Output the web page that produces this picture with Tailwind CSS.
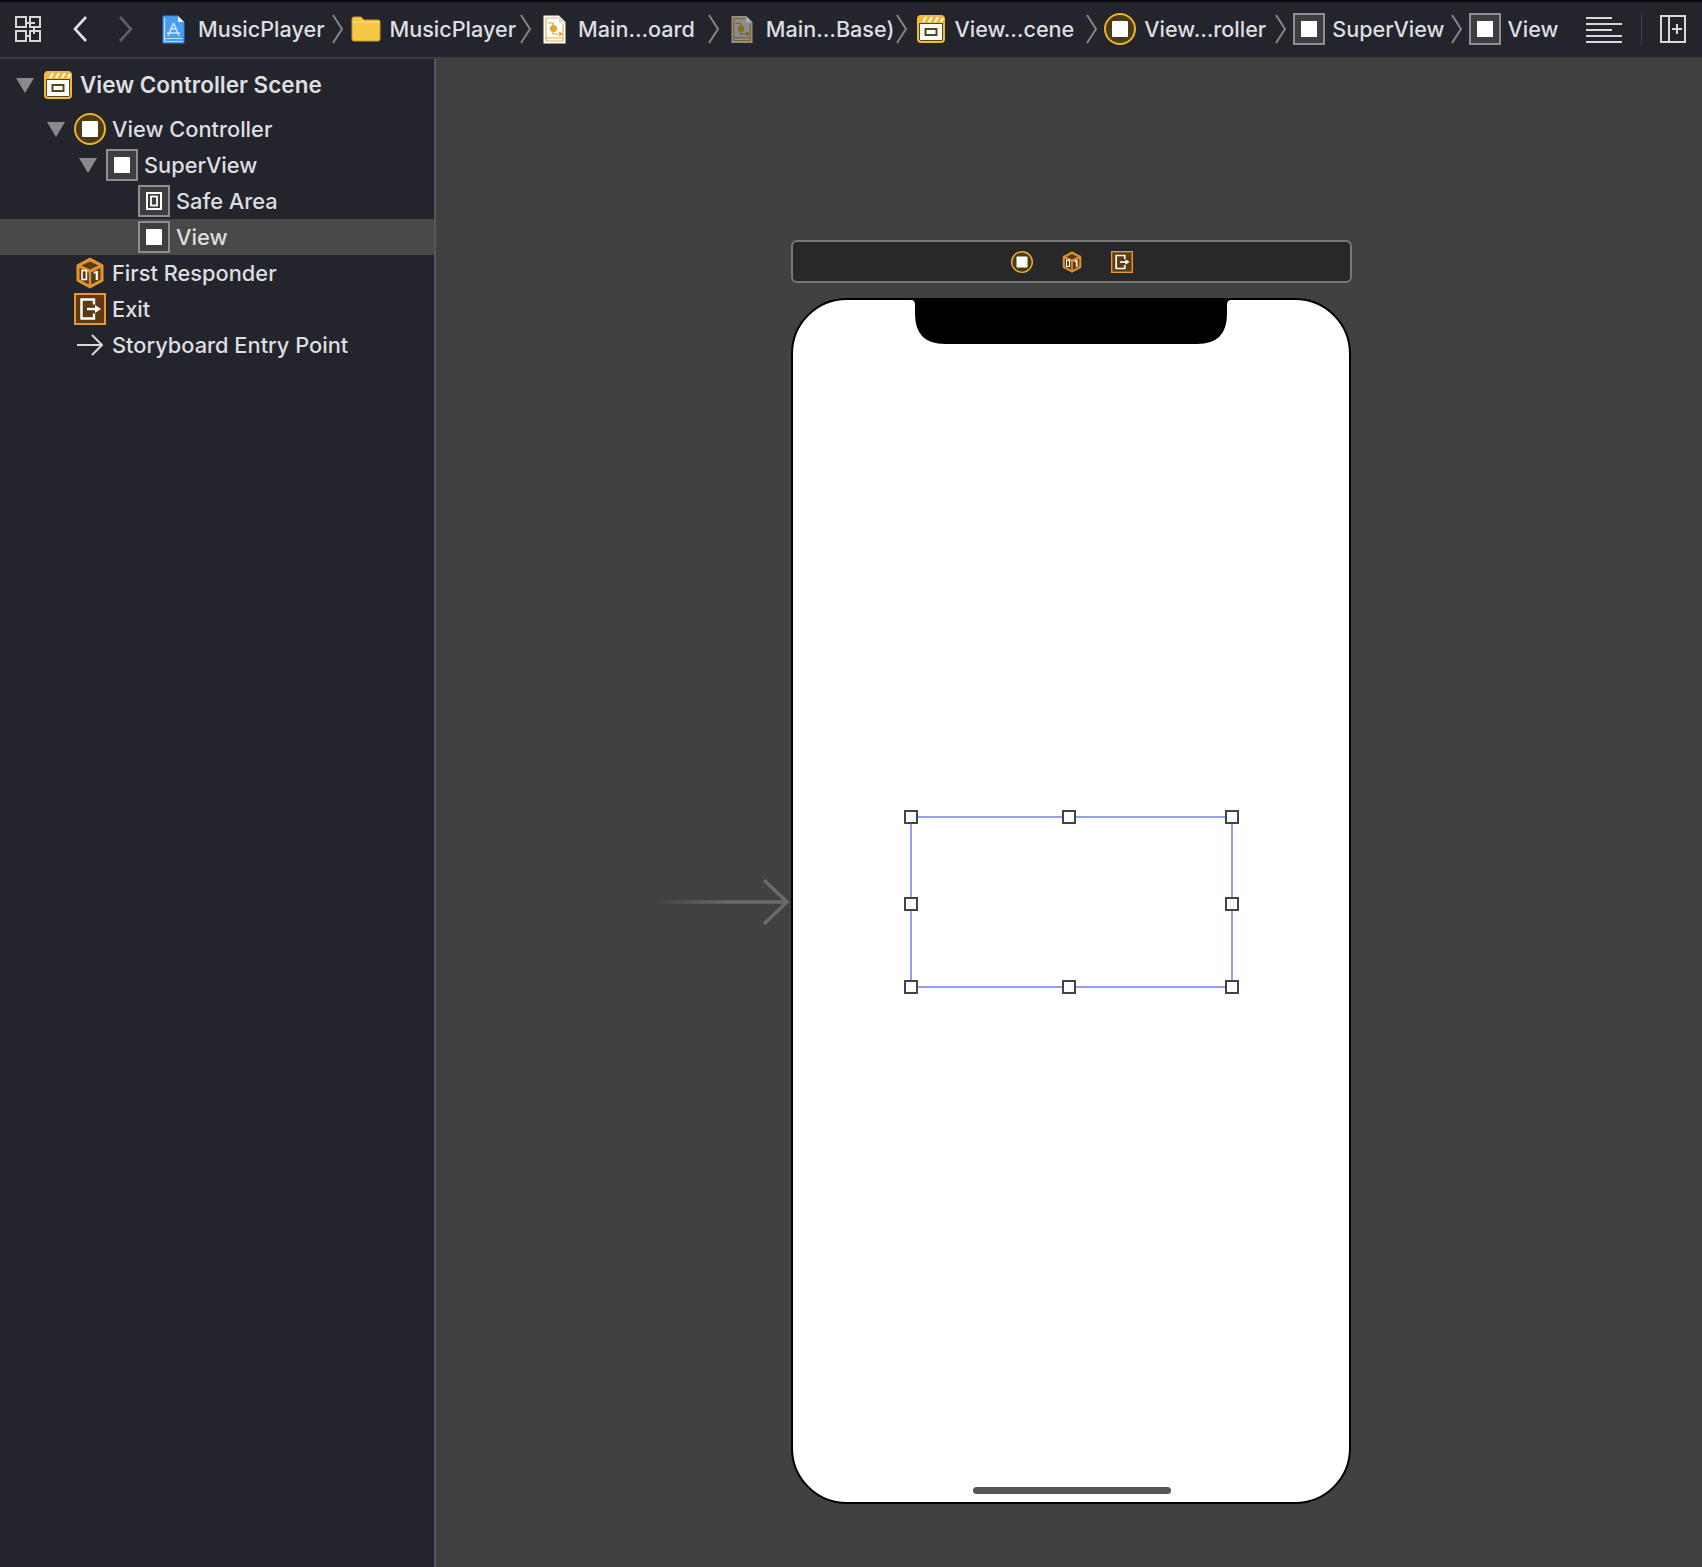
<!DOCTYPE html>
<html lang="en">
<head>
  <meta charset="UTF-8" />
  <title>MusicPlayer - Main.storyboard</title>
  <script src="https://cdn.jsdelivr.net/npm/@tailwindcss/browser@4"></script>
</head>
<body class="w-[1702px] h-[1567px] overflow-hidden bg-[#414141] font-['Inter','Liberation_Sans',sans-serif] text-[#dedee0] flex flex-col">

<svg class="hidden">
  <symbol id="crumb" viewBox="0 0 11 30"><path d="M1 1 L10 15 L1 29" fill="none" stroke="#85868a" stroke-width="2"/></symbol>
  <symbol id="tri" viewBox="0 0 18 15"><path d="M0 0 H18 L9 15 Z" fill="#8a8a8e"/></symbol>
  <symbol id="view" viewBox="0 0 32 32"><rect x="1" y="1" width="30" height="30" fill="#3e3e41" stroke="#8f8f92" stroke-width="2"/><rect x="8" y="8" width="16" height="16" fill="#fff"/></symbol>
  <symbol id="vc" viewBox="0 0 32 32"><circle cx="16" cy="16" r="15" fill="#4b3e16" stroke="#f2b02e" stroke-width="2"/><rect x="8" y="8" width="16" height="16" rx="1" fill="#fff"/></symbol>
  <symbol id="scene" viewBox="0 0 28 28"><rect x="1" y="1" width="26" height="26" rx="3" fill="#57461a" stroke="#f5b73b" stroke-width="2"/><path d="M1 8 V4 a3 3 0 0 1 3 -3 H24 a3 3 0 0 1 3 3 V8 Z" fill="#f5b73b"/><path d="M6 7 L9 2 M12 7 L15 2 M18 7 L21 2 M24 7 L26 3" stroke="#fff" stroke-width="2"/><rect x="3" y="9" width="22" height="16" fill="#fff"/><rect x="8.5" y="14" width="11" height="6" fill="#fff" stroke="#57461a" stroke-width="2"/></symbol>
  <symbol id="exit" viewBox="0 0 32 32"><rect x="1" y="1" width="30" height="30" fill="#5c3b14" stroke="#e8982f" stroke-width="2"/><path d="M20 11.5 V6.5 H7.5 V25.5 H20 V20.5" fill="none" stroke="#fff" stroke-width="2.4"/><path d="M13 16 H22" stroke="#fff" stroke-width="2.4"/><path d="M21 12 L27 16 L21 20 Z" fill="#fff"/></symbol>
  <symbol id="cube" viewBox="0 0 28 32"><path d="M14 1 L27 8 V24 L14 31 L1 24 V8 Z" fill="#e0942f" stroke="#e8982f" stroke-width="1"/><path d="M14 4.5 L22.5 8.5 L14 12.5 L5.5 8.5 Z" fill="#5c3b14"/><path d="M3.5 11 L12.8 15.5 V27.5 L3.5 22.5 Z" fill="#5c3b14"/><path d="M15.2 15.5 L24.5 11 V22.5 L15.2 27.5 Z" fill="#5c3b14"/><rect x="6" y="13.5" width="4.4" height="9" fill="none" stroke="#fff" stroke-width="1.6"/><text x="19.8" y="23" font-size="12" font-weight="800" fill="#fff" text-anchor="middle" font-family="Inter">1</text></symbol>
</svg>

<!-- barra superior -->
<header class="h-[59px] shrink-0 bg-[#23242c] border-t-2 border-t-[#0c0c0e] border-b-2 border-b-[#3b3b44] flex items-center text-[21.6px] font-[450] whitespace-nowrap pb-[1px]">
  <svg class="ml-[15px] w-[26px] h-[26px]" viewBox="0 0 26 26" fill="none" stroke="#d8d8da" stroke-width="2"><path d="M1 1 H11 V11 H1 Z M15 1 H25 V11 H15 Z M1 15 H11 V25 H1 Z M15 15 H25 V25 H15 Z"/><path d="M11 7 H20 M19 11 V18 M11 20 H16"/></svg>
  <svg class="ml-[32px] w-[14px] h-[26px]" viewBox="0 0 14 26" fill="none" stroke="#e2e2e4" stroke-width="2.6"><path d="M13 1 L2 13 L13 25"/></svg>
  <svg class="ml-[32px] w-[14px] h-[26px]" viewBox="0 0 14 26" fill="none" stroke="#5f6065" stroke-width="2.6"><path d="M1 1 L12 13 L1 25"/></svg>

  <svg class="ml-[29px] w-[23px] h-[29px]" viewBox="0 0 23 29"><path d="M1 1 H16 L22 7 V28 H1 Z" fill="#4a9cf0" stroke="#3a86de"/><path d="M16 1 V7 H22 Z" fill="#e6f2fd"/><path d="M2.5 3 V26.5 H20.5 M3 23.5 H20.5" fill="none" stroke="#bfe0fb" stroke-width="1.2"/><path d="M11.5 8 L6 21 M11.5 8 L17 21 M5 18 H18 M8 14 H15" stroke="#cfe6fb" stroke-width="1.5" fill="none"/></svg>
  <span class="ml-[13px]">MusicPlayer</span>
  <svg class="ml-[7px] w-[11px] h-[30px]"><use href="#crumb"/></svg>
  <svg class="ml-[8px] w-[30px] h-[26px]" viewBox="0 0 30 26"><path d="M1 3 a2 2 0 0 1 2 -2 H10 L13 4 H27 a2 2 0 0 1 2 2 V23 a2 2 0 0 1 -2 2 H3 a2 2 0 0 1 -2 -2 Z" fill="#f6c945" stroke="#c99a2c"/><path d="M1 6 H29" stroke="#fbe08a"/></svg>
  <span class="ml-[9px]">MusicPlayer</span>
  <svg class="ml-[4px] w-[11px] h-[30px]"><use href="#crumb"/></svg>
  <svg class="ml-[12px] w-[23px] h-[29px]" viewBox="0 0 23 29"><path d="M0.5 0.5 H16 L22.5 7 V28.5 H0.5 Z" fill="#fff"/><path d="M16 1 V7 H22 Z" fill="#d8d8d8"/><path d="M3 26 V3 H15 M20 9 V26 H3 M3 23 H20" fill="none" stroke="#e3b04a" stroke-width="1.2"/><path d="M5 8 H10 V19 H18 M16 17 L19 19 L16 21" fill="none" stroke="#d9a63a" stroke-width="1.2"/><circle cx="10.5" cy="13.5" r="3.5" fill="#e0a52f"/></svg>
  <span class="ml-[12px]">Main…oard</span>
  <svg class="ml-[13px] w-[11px] h-[30px]"><use href="#crumb"/></svg>
  <svg class="ml-[12px] w-[22px] h-[29px]" viewBox="0 0 23 29"><path d="M0.5 0.5 H16 L22.5 7 V28.5 H0.5 Z" fill="#8e8d8b"/><path d="M16 1 V7 H22 Z" fill="#b0afac"/><path d="M3 26 V3 H15 M20 9 V26 H3 M3 23 H20" fill="none" stroke="#7c6325" stroke-width="1.2"/><path d="M5 8 H10 V19 H18 M16 17 L19 19 L16 21" fill="none" stroke="#7c6325" stroke-width="1.2"/><circle cx="10.5" cy="13.5" r="3.5" fill="#8a6a1f"/></svg>
  <span class="ml-[13px]">Main…Base)</span>
  <svg class="ml-[2px] w-[11px] h-[30px]"><use href="#crumb"/></svg>
  <svg class="ml-[10px] w-[28px] h-[28px]"><use href="#scene"/></svg>
  <span class="ml-[9px]">View…cene</span>
  <svg class="ml-[12px] w-[11px] h-[30px]"><use href="#crumb"/></svg>
  <svg class="ml-[7px] w-[32px] h-[32px]"><use href="#vc"/></svg>
  <span class="ml-[8px]">View…roller</span>
  <svg class="ml-[9px] w-[11px] h-[30px]"><use href="#crumb"/></svg>
  <svg class="ml-[7px] w-[32px] h-[32px]"><use href="#view"/></svg>
  <span class="ml-[7px]">SuperView</span>
  <svg class="ml-[6px] w-[11px] h-[30px]"><use href="#crumb"/></svg>
  <svg class="ml-[7px] w-[32px] h-[32px]"><use href="#view"/></svg>
  <span class="ml-[7px]">View</span>

  <svg class="ml-[27px] w-[36px] h-[28px]" viewBox="0 0 36 28" stroke="#d8d8da" stroke-width="2"><path d="M0 3 H26 M0 9 H36 M0 15 H26 M0 21 H36 M0 27 H36"/></svg>
  <div class="ml-[19px] w-[1px] h-[32px] bg-[#3b3c44]"></div>
  <svg class="ml-[18px] w-[26px] h-[28px]" viewBox="0 0 26 28" fill="none" stroke="#d8d8da" stroke-width="2"><path d="M1 1 H25 V27 H1 Z M9 1 V27 M12 14 H22 M17 9 V19"/></svg>
</header>

<div class="flex flex-1 min-h-0">
  <!-- árbol del documento -->
  <aside class="w-[436px] shrink-0 bg-[#23242c] border-r-2 border-r-[#56575b] pt-[8px] text-[21.8px] font-[450]">
    <div class="h-[36px] mb-[8px] flex items-center">
      <svg class="ml-[16px] w-[18px] h-[15px]"><use href="#tri"/></svg>
      <svg class="ml-[10px] w-[28px] h-[28px]"><use href="#scene"/></svg>
      <span class="ml-[8px] text-[22.5px] font-semibold">View Controller Scene</span>
    </div>
    <div class="h-[36px] flex items-center">
      <svg class="ml-[47px] w-[18px] h-[15px]"><use href="#tri"/></svg>
      <svg class="ml-[9px] w-[32px] h-[32px]"><use href="#vc"/></svg>
      <span class="ml-[6px]">View Controller</span>
    </div>
    <div class="h-[36px] flex items-center">
      <svg class="ml-[79px] w-[18px] h-[15px]"><use href="#tri"/></svg>
      <svg class="ml-[9px] w-[32px] h-[32px]"><use href="#view"/></svg>
      <span class="ml-[6px]">SuperView</span>
    </div>
    <div class="h-[36px] flex items-center">
      <svg class="ml-[138px] w-[32px] h-[32px]" viewBox="0 0 32 32"><rect x="1" y="1" width="30" height="30" fill="#3e3e41" stroke="#8f8f92" stroke-width="2"/><rect x="9" y="8" width="14" height="16" fill="none" stroke="#fff" stroke-width="2"/><rect x="13" y="11.5" width="6" height="9" fill="none" stroke="#fff" stroke-width="1.8"/></svg>
      <span class="ml-[6px]">Safe Area</span>
    </div>
    <div class="h-[36px] flex items-center bg-[#484848]">
      <svg class="ml-[138px] w-[32px] h-[32px]"><use href="#view"/></svg>
      <span class="ml-[6px]">View</span>
    </div>
    <div class="h-[36px] flex items-center">
      <svg class="ml-[76px] w-[28px] h-[32px]"><use href="#cube"/></svg>
      <span class="ml-[8px]">First Responder</span>
    </div>
    <div class="h-[36px] flex items-center">
      <svg class="ml-[74px] w-[32px] h-[32px]"><use href="#exit"/></svg>
      <span class="ml-[6px]">Exit</span>
    </div>
    <div class="h-[36px] flex items-center">
      <svg class="ml-[77px] w-[26px] h-[22px]" viewBox="0 0 26 22" fill="none" stroke="#d8d8da" stroke-width="2"><path d="M0 11 H25 M15 1 L25 11 L15 21"/></svg>
      <span class="ml-[9px]">Storyboard Entry Point</span>
    </div>
  </aside>

  <!-- lienzo del storyboard -->
  <main class="relative flex-1">
    <div class="absolute left-[355px] top-[181px] w-[561px] h-[43px] bg-[#282828] border-2 border-[#77777a] rounded-[6px] flex items-center justify-center gap-[29px] pl-[1px]">
      <svg class="w-[22px] h-[22px]"><use href="#vc"/></svg>
      <svg class="w-[20px] h-[22px]"><use href="#cube"/></svg>
      <svg class="w-[22px] h-[22px]"><use href="#exit"/></svg>
    </div>

    <svg class="absolute left-[221px] top-[818px] w-[134px] h-[50px]" viewBox="0 0 134 50" fill="none">
      <defs><linearGradient id="fade" gradientUnits="userSpaceOnUse" x1="-4" y1="0" x2="130" y2="0"><stop offset="0" stop-color="#6a6a6a" stop-opacity="0"/><stop offset="0.55" stop-color="#6a6a6a"/></linearGradient></defs>
      <path d="M0 25 H131" stroke="url(#fade)" stroke-width="3.5"/>
      <path d="M107 3 L130 25 L107 47" stroke="#6a6a6a" stroke-width="3.5"/>
    </svg>

    <div class="absolute left-[355px] top-[239px] w-[560px] h-[1206px] bg-white border-2 border-black rounded-[56px] overflow-hidden">
      <svg class="absolute left-[118px] top-[-2px] w-[320px] h-[46px]" viewBox="0 0 320 46"><path d="M0 0 H320 V2 Q316 2 316 7 V16 Q316 46 286 46 H34 Q4 46 4 16 V7 Q4 2 0 2 Z" fill="#000"/></svg>
      <div class="absolute left-[180px] top-[1187px] w-[198px] h-[7px] bg-[#555] rounded-full"></div>
    </div>

    <!-- selección -->
    <div class="absolute left-[474px] top-[757px] w-[323px] h-[172px] border-2 border-[#929ff3]">
      <div class="absolute left-[-8px] top-[-8px] size-[14px] bg-white border-2 border-[#444]"></div>
      <div class="absolute left-[150px] top-[-8px] size-[14px] bg-white border-2 border-[#444]"></div>
      <div class="absolute right-[-8px] top-[-8px] size-[14px] bg-white border-2 border-[#444]"></div>
      <div class="absolute left-[-8px] top-[79px] size-[14px] bg-white border-2 border-[#444]"></div>
      <div class="absolute right-[-8px] top-[79px] size-[14px] bg-white border-2 border-[#444]"></div>
      <div class="absolute left-[-8px] bottom-[-8px] size-[14px] bg-white border-2 border-[#444]"></div>
      <div class="absolute left-[150px] bottom-[-8px] size-[14px] bg-white border-2 border-[#444]"></div>
      <div class="absolute right-[-8px] bottom-[-8px] size-[14px] bg-white border-2 border-[#444]"></div>
    </div>
  </main>
</div>
</body>
</html>
